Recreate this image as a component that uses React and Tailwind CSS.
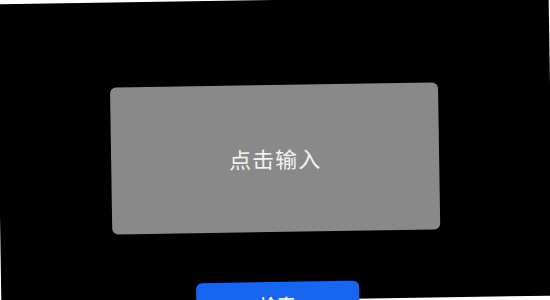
import React from "react";

export default function App() {
  return (
    <div className="w-[550px] h-[300px] overflow-hidden bg-white">
      <div
        className="w-[552px] h-[300px] -ml-px bg-black -rotate-[0.9deg] flex flex-col items-center pt-[85px]"
        style={{ fontFamily: '"Noto Sans CJK SC", "Noto Sans", sans-serif' }}
      >
        <button className="shrink-0 w-[328px] h-[147px] bg-[#898989] rounded-[6px] flex items-center justify-center text-[22px] text-[#f2f2f2] tracking-[1px]">
          点击输入
        </button>
        <button className="shrink-0 mt-[50px] w-[163px] h-[44px] bg-[#1866f0] rounded-[6px] text-white text-[18px] font-medium flex items-center justify-center">
          检索
        </button>
      </div>
    </div>
  );
}
